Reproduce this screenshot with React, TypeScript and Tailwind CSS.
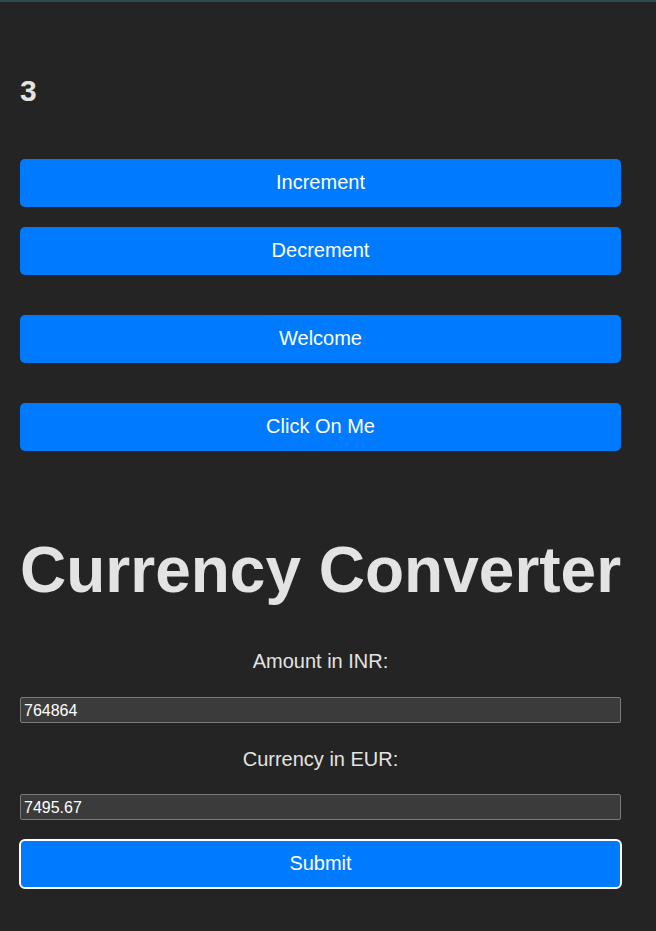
import React from "react";

const btn =
  "block w-[601px] h-[48px] rounded-[5px] bg-[#007bff] text-white text-[20px] leading-[46px] pb-[2px] text-center";

const inputCls =
  "w-[601px] h-[26px] bg-[#3b3b3b] border border-[#7a7a7a] rounded-[2px] text-white text-[16px] pl-[3px] pr-[4px] pt-[2px] pb-0 outline-none";

export default function App() {
  return (
    <div
      className="min-h-[931px] bg-[#242424] text-[#e3e3e3]"
      style={{ fontFamily: '"Liberation Sans", Arial, sans-serif' }}
    >
      <div className="h-[2px] bg-[#2e4a50]" />
      <div className="ml-5 w-[601px] flex flex-col">
        <div className="mt-[74px] h-[30px] text-[30px] leading-[30px] font-bold">3</div>
        <button className={`${btn} mt-[53px]`}>Increment</button>
        <button className={`${btn} mt-[20px]`}>Decrement</button>
        <button className={`${btn} mt-[40px]`}>Welcome</button>
        <button className={`${btn} mt-[40px]`}>Click On Me</button>
        <div className="mt-[87px] h-[64px] text-[64px] leading-[64px] font-bold text-center whitespace-nowrap">
          Currency Converter
        </div>
        <div className="mt-[49px] h-[20px] text-[20px] leading-[20px] text-center">Amount in INR:</div>
        <input
          readOnly
          value="764864"
          className={`mt-[26px] ${inputCls}`}
          style={{ fontFamily: '"Liberation Sans", Arial, sans-serif' }}
        />
        <div className="mt-[26px] h-[20px] text-[20px] leading-[20px] text-center">Currency in EUR:</div>
        <input
          readOnly
          value="7495.67"
          className={`mt-[25px] ${inputCls}`}
          style={{ fontFamily: '"Liberation Sans", Arial, sans-serif' }}
        />
        <button className="mt-[19px] -ml-px block w-[603px] h-[50px] rounded-[6px] border-2 border-white bg-[#007bff] text-white text-[20px] leading-[44px] pb-[2px] text-center">
          Submit
        </button>
      </div>
    </div>
  );
}
